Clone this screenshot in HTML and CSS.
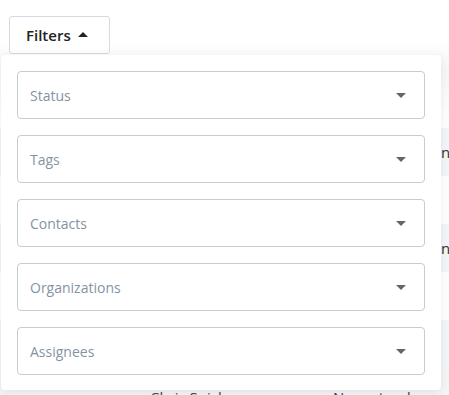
FILE: index.html
```html
<!DOCTYPE html>
<html lang="en">
	<head>
		<meta charset="UTF-8" />
		<meta name="viewport" content="width=device-width, initial-scale=1.0" />
		<title>Filters</title>
		<link rel="stylesheet" href="styles.css">
	</head>
	<body>
		<div class="page">
			<div class="toolbar">
				<button class="filterBtn" type="button">Filters <span class="caretUp"></span></button>
			</div>

			<!-- table behind the open dropdown -->
			<div class="table">
				<div class="row"></div>
				<div class="row gray"><span class="cell"></span><span class="cell"></span><span class="cell">name</span></div>
				<div class="row"></div>
				<div class="row gray"><span class="cell"></span><span class="cell"></span><span class="cell">name</span></div>
				<div class="row"></div>
				<div class="row gray"></div>
				<div class="row last"><span class="cell">Chris Snick</span><span class="cell">Newsstand</span><span class="cell"></span></div>
			</div>

			<div class="dropdown">
				<div class="select"><span class="placeholder">Status</span><span class="caretDown"></span></div>
				<div class="select"><span class="placeholder">Tags</span><span class="caretDown"></span></div>
				<div class="select"><span class="placeholder">Contacts</span><span class="caretDown"></span></div>
				<div class="select"><span class="placeholder">Organizations</span><span class="caretDown"></span></div>
				<div class="select"><span class="placeholder">Assignees</span><span class="caretDown"></span></div>
			</div>
		</div>
	</body>
</html>
```

FILE: styles.css
```css
* {
	margin: 0;
	padding: 0;
	box-sizing: border-box;
}

html, body {
	width: 100%;
	height: 100%;
	overflow: hidden;
}
body {
	font-family: "Open Sans", "Noto Sans", sans-serif;
	background: #fff;
	color: #333;
}
.page {
	position: relative;
	height: 100%;
	background: linear-gradient(#fff 0, #fff 40px, #f6f7f9 70px, #fff 120px);
}

.toolbar {
	padding: 16px 0 0 9px;
	height: 80px;
}
.filterBtn {
	display: flex;
	align-items: center;
	gap: 7px;
	width: 101px;
	height: 38px;
	padding-left: 16px;
	font-family: inherit;
	font-size: 15px;
	font-weight: 600;
	color: #222;
	background: #fff;
	border: 1px solid #d5dbe0;
	border-radius: 3px;
}
.caretUp {
	width: 0;
	height: 0;
	border-left: 5px solid transparent;
	border-right: 5px solid transparent;
	border-bottom: 5px solid #222;
	margin-top: -1px;
}

/* table rows behind */
.row {
	display: grid;
	grid-template-columns: 183px 108px 1fr;
	height: 48px;
	padding-left: 150px;
	align-items: center;
	font-size: 15px;
	color: #333;
	white-space: nowrap;
}
.row.gray {
	background: #f4f6f8;
}
.row.last {
	background: #f4f5f7;
	padding-top: 10px;
	color: #444;
}

/* dropdown panel */
.dropdown {
	position: absolute;
	left: 1px;
	top: 55px;
	width: 440px;
	padding: 16px 16px 15px;
	display: flex;
	flex-direction: column;
	gap: 16px;
	background: #fff;
	border-radius: 4px;
	box-shadow: 0 2px 10px rgba(40, 50, 60, 0.10);
}
.select {
	display: flex;
	align-items: center;
	justify-content: space-between;
	height: 48px;
	padding: 0 18px 0 12px;
	border: 1px solid #c7ccd1;
	border-radius: 4px;
	background: #fff;
}
.placeholder {
	font-size: 14px;
	color: #8593a3;
}
.caretDown {
	width: 0;
	height: 0;
	border-left: 5px solid transparent;
	border-right: 5px solid transparent;
	border-top: 5px solid #666;
}
```
